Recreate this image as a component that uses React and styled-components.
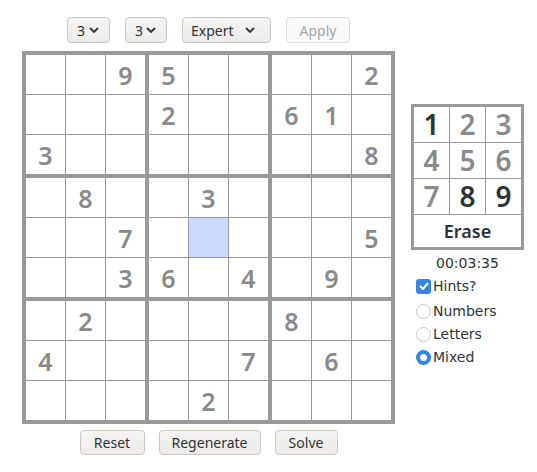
import React from 'react'
import styled, { createGlobalStyle } from 'styled-components'

const GlobalStyle = createGlobalStyle`
  body {
    margin: 0;
    background: #FFFFFF;
    font-family: "DejaVu Sans", sans-serif;
    color: #2E3436;
  }
`

const Page = styled.div`
  display: flex;
  align-items: center;
  gap: 16px;
  padding: 17px 0 0 22px;
`

const LeftColumn = styled.div`
  display: flex;
  flex-direction: column;
  align-items: center;
  width: 373px;
`

const Toolbar = styled.div`
  display: flex;
  gap: 15px;
  height: 26px;
  margin-bottom: 8px;
`

const SelectBox = styled.div`
  box-sizing: border-box;
  display: flex;
  align-items: center;
  justify-content: space-between;
  width: ${props => props.w}px;
  height: 26px;
  padding: ${props => props.pad};
  border: 1px solid #CDC7C2;
  border-radius: 4px;
  background: linear-gradient(#F6F5F4, #EDEBE9);
  font-family: "Noto Sans", sans-serif;
  font-size: 14px;
  color: #2E3436;
`

const Button = styled.button`
  box-sizing: border-box;
  width: ${props => props.w}px;
  height: ${props => props.h || 25}px;
  margin: 0;
  padding: 0;
  border: 1px solid ${props => props.disabled ? '#DDD9D6' : '#CDC7C2'};
  border-radius: 4px;
  background: ${props => props.disabled ? '#FAFAFA' : 'linear-gradient(#F6F5F4, #EDEBE9)'};
  font-family: "Noto Sans", sans-serif;
  font-size: 14px;
  color: ${props => props.disabled ? '#A5A7A7' : '#2E3436'};
`

const Board = styled.div`
  display: grid;
  grid-template-columns: repeat(3, auto);
  gap: 4px;
  border: 4px solid #999999;
  background: #999999;
`

const Box = styled.div`
  display: grid;
  grid-template-columns: repeat(3, 39px);
  grid-auto-rows: 39px;
  gap: 1px;
`

const Cell = styled.div`
  display: flex;
  align-items: center;
  justify-content: center;
  background: ${props => props.selected ? '#CCD8FF' : '#FFFFFF'};
  font-family: "Noto Sans", sans-serif;
  font-weight: 600;
  font-size: 25px;
  color: #8A8A8A;
`

const ActionBar = styled.div`
  display: flex;
  gap: 14px;
  margin-top: 6px;
`

const Side = styled.div`
  display: flex;
  flex-direction: column;
  width: 113px;
`

const Pad = styled.div`
  display: grid;
  grid-template-columns: repeat(3, 35px);
  grid-template-rows: repeat(3, 35px) 32px;
  gap: 1px;
  border: 3px solid #999999;
  background: #999999;
`

const PadKey = styled.div`
  display: flex;
  align-items: center;
  justify-content: center;
  background: #FFFFFF;
  font-family: "Noto Sans", sans-serif;
  font-weight: 600;
  font-size: 28px;
  color: ${props => props.active ? '#2E3436' : '#8A8A8A'};
`

const EraseKey = styled(PadKey)`
  grid-column: 1 / -1;
  font-size: 18px;
  color: #2E3436;
`

const Timer = styled.div`
  margin-top: 5px;
  height: 17px;
  text-align: center;
  font-size: 14px;
  line-height: 17px;
`

const Option = styled.label`
  display: flex;
  align-items: center;
  gap: 2px;
  height: 23px;
  margin-top: ${props => props.mt || 0}px;
  padding-left: 5px;
  font-size: 14px;
`

const CheckMark = styled.span`
  flex: none;
  display: flex;
  align-items: center;
  justify-content: center;
  width: 15px;
  height: 15px;
  border-radius: 3px;
  background: #3584E4;
`

const Radio = styled.span`
  flex: none;
  box-sizing: border-box;
  width: 15px;
  height: 15px;
  border-radius: 50%;
  border: ${props => props.checked ? '4px solid #3584E4' : '1px solid #CDC7C2'};
  background: #FFFFFF;
`

const Chevron = () => (
  <svg width="10" height="6" viewBox="0 0 10 6">
    <polyline points="1,1 5,5 9,1" fill="none" stroke="#2E3436" strokeWidth="1.8" />
  </svg>
)

const puzzle = [
  '..95....2',
  '...2..61.',
  '3.......8',
  '.8..3....',
  '..7.....5',
  '..36.4.9.',
  '.2....8..',
  '4....7.6.',
  '....2....',
]

const selected = [4, 4]

function boxCells(br, bc) {
  const cells = []
  for (let r = br * 3; r < br * 3 + 3; r++) {
    for (let c = bc * 3; c < bc * 3 + 3; c++) {
      const v = puzzle[r][c]
      cells.push(
        <Cell key={c} selected={r === selected[0] && c === selected[1]}>
          {v === '.' ? '' : v}
        </Cell>
      )
    }
  }
  return cells
}

const activeKeys = ['1', '8', '9']

export default function App() {
  return (
    <>
      <GlobalStyle />
      <Page>
        <LeftColumn>
          <Toolbar>
            <SelectBox w={43} pad="0 10px 0 9px"><span>3</span><Chevron /></SelectBox>
            <SelectBox w={42} pad="0 10px 0 9px"><span>3</span><Chevron /></SelectBox>
            <SelectBox w={89} pad="0 15px 0 8px"><span>Expert</span><Chevron /></SelectBox>
            <Button disabled w={64} h={26}>Apply</Button>
          </Toolbar>
          <Board>
            {[0, 1, 2].map(br => [0, 1, 2].map(bc => (
              <Box key={br + '-' + bc}>{boxCells(br, bc)}</Box>
            )))}
          </Board>
          <ActionBar>
            <Button w={65}>Reset</Button>
            <Button w={102}>Regenerate</Button>
            <Button w={63}>Solve</Button>
          </ActionBar>
        </LeftColumn>
        <Side>
          <Pad>
            {['1', '2', '3', '4', '5', '6', '7', '8', '9'].map(n => (
              <PadKey key={n} active={activeKeys.includes(n)}>{n}</PadKey>
            ))}
            <EraseKey>Erase</EraseKey>
          </Pad>
          <Timer>00:03:35</Timer>
          <Option mt={3}>
            <CheckMark>
              <svg width="10" height="8" viewBox="0 0 10 8">
                <polyline points="1,4 4,7 9,1" fill="none" stroke="#FFFFFF" strokeWidth="2" />
              </svg>
            </CheckMark>
            Hints?
          </Option>
          <Option mt={2}><Radio />Numbers</Option>
          <Option><Radio />Letters</Option>
          <Option><Radio checked />Mixed</Option>
        </Side>
      </Page>
    </>
  )
}
